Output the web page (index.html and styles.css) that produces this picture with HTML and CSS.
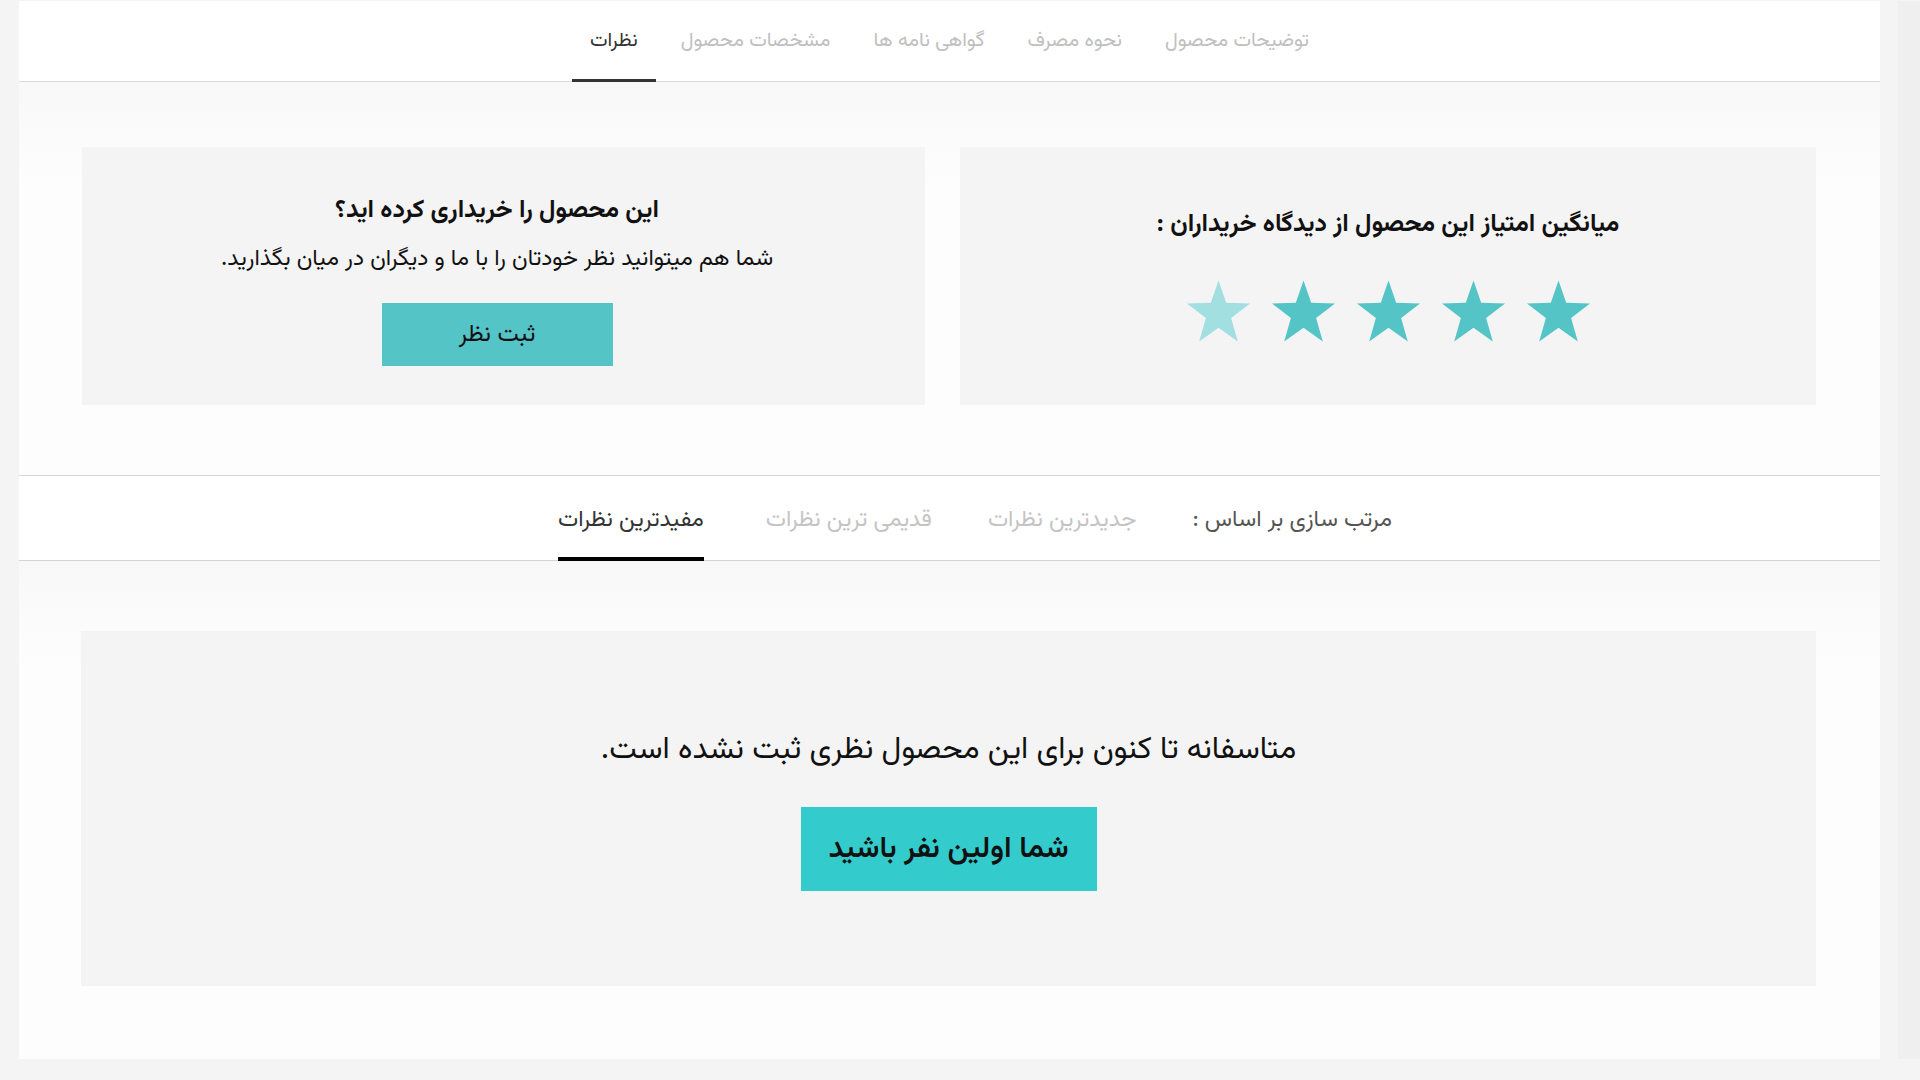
FILE: index.html
```html
<!DOCTYPE html>
<html lang="fa" dir="rtl">
<head>
<meta charset="utf-8">
<title>نظرات</title>
<link rel="stylesheet" href="styles.css">
</head>
<body>
<div class="page">
  <main class="panel">
    <nav class="tabs">
      <a class="tab">توضیحات محصول</a>
      <a class="tab">نحوه مصرف</a>
      <a class="tab">گواهی نامه ها</a>
      <a class="tab">مشخصات محصول</a>
      <a class="tab active">نظرات</a>
    </nav>

    <section class="summary">
      <div class="box rating">
        <h3 class="rating-title">میانگین امتیاز این محصول از دیدگاه خریداران :</h3>
        <div class="stars">
          <svg class="star" viewBox="0 0 66 62"><path d="M33 0 L40.8 22.6 L65 23.3 L45.8 38.2 L52.6 62 L33 48 L13.4 62 L20.2 38.2 L1 23.3 L25.2 22.6 Z"/></svg>
          <svg class="star" viewBox="0 0 66 62"><path d="M33 0 L40.8 22.6 L65 23.3 L45.8 38.2 L52.6 62 L33 48 L13.4 62 L20.2 38.2 L1 23.3 L25.2 22.6 Z"/></svg>
          <svg class="star" viewBox="0 0 66 62"><path d="M33 0 L40.8 22.6 L65 23.3 L45.8 38.2 L52.6 62 L33 48 L13.4 62 L20.2 38.2 L1 23.3 L25.2 22.6 Z"/></svg>
          <svg class="star" viewBox="0 0 66 62"><path d="M33 0 L40.8 22.6 L65 23.3 L45.8 38.2 L52.6 62 L33 48 L13.4 62 L20.2 38.2 L1 23.3 L25.2 22.6 Z"/></svg>
          <svg class="star dim" viewBox="0 0 66 62"><path d="M33 0 L40.8 22.6 L65 23.3 L45.8 38.2 L52.6 62 L33 48 L13.4 62 L20.2 38.2 L1 23.3 L25.2 22.6 Z"/></svg>
        </div>
      </div>
      <div class="box ask">
        <h3 class="ask-title">این محصول را خریداری کرده اید؟</h3>
        <p class="ask-text">شما هم میتوانید نظر خودتان را با ما و دیگران در میان بگذارید.</p>
        <button class="btn-submit">ثبت نظر</button>
      </div>
    </section>

    <nav class="sortbar">
      <span class="sort-label">مرتب سازی بر اساس :</span>
      <a class="sort-item">جدیدترین نظرات</a>
      <a class="sort-item">قدیمی ترین نظرات</a>
      <a class="sort-item active">مفیدترین نظرات</a>
    </nav>

    <section class="comments">
      <div class="box empty">
        <p class="empty-text">متاسفانه تا کنون برای این محصول نظری ثبت نشده است.</p>
        <button class="btn-first">شما اولین نفر باشید</button>
      </div>
    </section>
  </main>
  <div class="side-strip"></div>
</div>
</body>
</html>
```

FILE: styles.css
```css
* { box-sizing: border-box; }
html, body {
  margin: 0;
  padding: 0;
  background: #f4f4f4;
}
body {
  font-family: "Vazirmatn", "Noto Sans Arabic", "DejaVu Sans", sans-serif;
  color: #111;
  direction: rtl;
}
.page {
  display: flex;
  direction: ltr;
  padding: 1px 0 21px 19px;
  height: 1080px;
}
.panel {
  direction: rtl;
  width: 1861px;
  height: 1058px;
  background: #fff;
  display: flex;
  flex-direction: column;
}
.side-strip {
  margin-left: 18px;
  width: 22px;
  height: 1058px;
  background: #efefef;
}

/* top tabs */
.tabs {
  height: 81px;
  border-bottom: 1px solid #dcdcdc;
  display: flex;
  justify-content: center;
  align-items: stretch;
  gap: 7px;
}
.tab {
  display: flex;
  align-items: center;
  padding: 1px 18px 0;
  font-size: 20px;
  color: #c0c0c0;
  border-bottom: 3px solid transparent;
  margin-bottom: -1px;
}
.tab.active {
  color: #333;
  border-bottom-color: #333;
}

/* summary boxes */
.summary {
  padding: 65px 64px 70px 62px;
  display: grid;
  grid-template-columns: 856px 843px;
  gap: 35px;
  background: linear-gradient(#f8f8f8, #fdfdfd 100px);
}
.box {
  background: #f4f4f4;
}
.rating {
  height: 258px;
  display: flex;
  flex-direction: column;
  align-items: center;
  padding-top: 61px;
}
.rating-title {
  margin: 0;
  font-size: 25px;
  font-weight: bold;
  line-height: 34px;
}
.stars {
  margin-top: 38px;
  display: flex;
  gap: 20px;
}
.star {
  width: 65px;
  height: 62px;
  fill: #54c4c7;
}
.star.dim { fill: #a2dfe0; }

.ask {
  height: 258px;
  display: flex;
  flex-direction: column;
  align-items: center;
  padding-top: 47px;
  padding-right: 13px;
}
.ask-title {
  margin: 0;
  font-size: 25px;
  font-weight: bold;
  line-height: 34px;
}
.ask-text {
  margin: 15px 0 0;
  font-size: 23px;
  line-height: 32px;
}
.btn-submit {
  margin-top: 28px;
  width: 231px;
  height: 63px;
  border: 0;
  background: #54c4c7;
  font-family: inherit;
  font-size: 24px;
  color: #111;
}

/* sort bar */
.sortbar {
  height: 86px;
  border-top: 1px solid #d6d6d6;
  border-bottom: 1px solid #d6d6d6;
  display: flex;
  justify-content: center;
  align-items: stretch;
  gap: 56px;
  padding-left: 51px;
}
.sort-label, .sort-item {
  display: flex;
  align-items: center;
  font-size: 23px;
  padding-top: 7px;
  border-bottom: 4px solid transparent;
  margin-bottom: -1px;
}
.sort-label { color: #555; }
.sort-item { color: #c4c4c4; }
.sort-item.active {
  margin-right: 6px;
  color: #333;
  border-bottom-color: #000;
}

/* comments */
.comments {
  flex: 1;
  padding: 70px 64px 0 62px;
  background: linear-gradient(#f8f8f8, #fdfdfd 100px);
}
.empty {
  height: 355px;
  display: flex;
  flex-direction: column;
  align-items: center;
  padding-top: 98px;
}
.empty-text {
  margin: 0;
  font-size: 31px;
  line-height: 44px;
}
.btn-first {
  margin-top: 34px;
  width: 296px;
  height: 84px;
  border: 0;
  background: #33cbcb;
  font-family: inherit;
  font-size: 30px;
  font-weight: 600;
  color: #111;
}
```
